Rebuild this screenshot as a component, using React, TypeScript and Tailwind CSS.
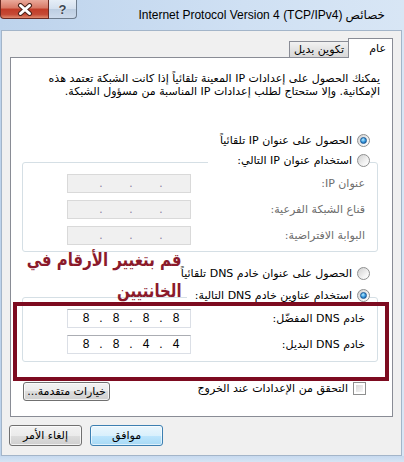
import React from 'react';

type RadioProps = { checked?: boolean };

// Windows 7 style radio bullet
function Radio({ checked }: RadioProps) {
  return (
    <span className="flex h-[13px] w-[13px] shrink-0 items-center justify-center rounded-full border border-[#8e8f8f] bg-[linear-gradient(135deg,#cfcfcf,#f4f4f4_65%,#ffffff)]">
      {checked && (
        <span className="h-[7px] w-[7px] rounded-full border border-[#1c5a96] bg-[radial-gradient(circle_at_40%_35%,#b8edff_0%,#3a9be0_50%,#0e4f94_100%)]" />
      )}
    </span>
  );
}

function Checkbox() {
  return (
    <span className="flex h-[13px] w-[13px] shrink-0 border border-[#8e8f8f] bg-white p-[2px]">
      <span className="block h-full w-full bg-[linear-gradient(135deg,#d9d9d9,#f7f7f7)]" />
    </span>
  );
}

type IpBoxProps = { parts: string[]; disabled?: boolean };

function IpBox({ parts, disabled }: IpBoxProps) {
  return (
    <div
      dir="ltr"
      className={
        disabled
          ? "flex h-[19px] w-[124px] shrink-0 items-center border border-[#d9d9d9] bg-[#f0f0f0] pl-[6px] font-['Liberation_Sans',sans-serif] text-[12px] text-[#8a7fa0]"
          : "flex h-[19px] w-[124px] shrink-0 items-center border border-[#dbdfe6] border-t-[#abadb3] bg-white pl-[6px] font-['Liberation_Sans',sans-serif] text-[12px] text-black"
      }
    >
      {parts.map((p, i) => (
        <React.Fragment key={i}>
          {i > 0 && <span className="w-[6px] text-center">.</span>}
          <span className="w-[24px] text-center">{p}</span>
        </React.Fragment>
      ))}
    </div>
  );
}

type FieldRowProps = { label: string; parts: string[]; disabled?: boolean };

function FieldRow({ label, parts, disabled }: FieldRowProps) {
  return (
    <div className="flex h-[19px] items-center justify-between">
      <span className={disabled ? 'text-[#6d6d6d]' : 'text-black'}>{label}</span>
      <IpBox parts={parts} disabled={disabled} />
    </div>
  );
}

function OptionRow({ label, checked }: { label: string; checked?: boolean }) {
  return (
    <div className="flex h-[16px] items-center gap-[5px]">
      <Radio checked={checked} />
      <span>{label}</span>
    </div>
  );
}

export default function App() {
  return (
    <div className="relative flex h-[462px] w-[404px] flex-col overflow-hidden bg-[linear-gradient(90deg,#bdd3ec,#cfe0f3_60%,#d8e6f5)] font-['DejaVu_Sans',sans-serif] text-[11px] leading-[13px] text-black">
      {/* title bar */}
      <div className="flex h-[30px] shrink-0 items-start">
        <div className="flex h-[19px]">
          <div className="flex h-[19px] w-[49px] items-center justify-center rounded-bl-[4px] border border-t-0 border-[#6b2a22] bg-[linear-gradient(#eaa99a,#d77764_45%,#c23b27_50%,#c54a35_80%,#e08a6e)]">
            <svg width="16" height="13" viewBox="0 0 16 13">
              <path d="M3.5 2.5 L12.5 10.5 M12.5 2.5 L3.5 10.5" stroke="#4a2219" strokeWidth="5" strokeLinecap="round" />
              <path d="M3.5 2.5 L12.5 10.5 M12.5 2.5 L3.5 10.5" stroke="#ffffff" strokeWidth="3" strokeLinecap="round" />
            </svg>
          </div>
          <div className="flex h-[19px] w-[28px] items-center justify-center rounded-br-[4px] border-b border-r border-[#6d7c8d] bg-[linear-gradient(#e6eef7,#d3dfee_50%,#bccde1_50%,#cddbec)] font-['Liberation_Sans',sans-serif] text-[13px] font-bold text-[#3d4652] [text-shadow:0_0_2px_#ffffff]">
            ?
          </div>
        </div>
        <div dir="ltr" className="ml-auto mr-[19px] mt-[8px] flex gap-[3px] text-[12px] leading-[14px]">
          <span className="font-['Liberation_Sans',sans-serif]">Internet Protocol Version 4 (TCP/IPv4)</span>
          <span>خصائص</span>
        </div>
      </div>

      {/* dialog client area */}
      <div dir="rtl" className="ml-[1px] mr-[2px] flex h-[426px] shrink-0 flex-col border border-[#a3b5c9] bg-[#f0f0f0]">
        {/* tabs */}
        <div className="flex h-[26px] items-end px-[8px]">
          <div className="relative z-10 -mb-px flex h-[20px] w-[45px] items-center border border-b-0 border-[#898c95] bg-white pr-[6px]">
            عام
          </div>
          <div className="flex h-[16px] w-[59px] items-center justify-center border-l border-t border-[#898c95] bg-[linear-gradient(#f2f2f2,#e3e3e3_50%,#d9d9d9)]">
            تكوين بديل
          </div>
        </div>

        {/* tab page */}
        <div className="mx-[8px] flex h-[360px] flex-col border border-[#898c95] bg-white">
          <p className="mt-[14px] pl-[30px] pr-[12px]">
            يمكنك الحصول على إعدادات IP المعينة تلقائياً إذا كانت الشبكة تعتمد هذه
            <br />
            الإمكانية. وإلا ستحتاج لطلب إعدادات IP المناسبة من مسؤول الشبكة.
          </p>

          <div className="mt-[34px] pr-[22px]">
            <OptionRow label="الحصول على عنوان IP تلقائياً" checked />
          </div>

          <fieldset className="ml-[11px] mr-[14px] mt-[4px] rounded-[3px] border border-[#d5dfe5]">
            <legend className="mr-[7px] pb-[4px] pl-[29px]">
              <OptionRow label="استخدام عنوان IP التالي:" />
            </legend>
            <div className="mt-[2px] flex flex-col gap-[7px] pb-[6px] pl-[44px] pr-[12px]">
              <FieldRow label="عنوان IP:" parts={['', '', '', '']} disabled />
              <FieldRow label="قناع الشبكة الفرعية:" parts={['', '', '', '']} disabled />
              <FieldRow label="البوابة الافتراضية:" parts={['', '', '', '']} disabled />
            </div>
          </fieldset>

          <div className="mt-[13px] pr-[22px]">
            <OptionRow label="الحصول على عنوان خادم DNS تلقائياً" />
          </div>

          <fieldset className="ml-[11px] mr-[14px] mt-[6px] rounded-[3px] border border-[#d5dfe5]">
            <legend className="mr-[7px] pb-[4px] pl-[8px]">
              <OptionRow label="استخدام عناوين خادم DNS التالية:" checked />
            </legend>
            <div className="mt-[2px] flex flex-col gap-[7px] pb-[7px] pl-[44px] pr-[12px]">
              <FieldRow label="خادم DNS المفضّل:" parts={['8', '8', '8', '8']} />
              <FieldRow label="خادم DNS البديل:" parts={['8', '8', '4', '4']} />
            </div>
          </fieldset>

          <div className="mt-[20px] flex items-start justify-between pl-[12px] pr-[26px]">
            <div className="flex h-[13px] items-center gap-[5px]">
              <Checkbox />
              <span>التحقق من الإعدادات عند الخروج</span>
            </div>
            <div className="flex h-[19px] w-[87px] items-center justify-center rounded-[3px] border border-[#707070] bg-[linear-gradient(#f2f2f2,#ebebeb_50%,#dddddd_50%,#cfcfcf)] shadow-[inset_0_0_0_1px_rgba(255,255,255,0.7)]">
              خيارات متقدمة...
            </div>
          </div>
        </div>

        {/* dialog buttons */}
        <div className="mt-[8px] flex justify-end gap-[8px] pl-[7px]">
          <div className="flex h-[21px] w-[73px] items-center justify-center rounded-[3px] border border-[#3c7fb1] bg-[linear-gradient(#eaf6fd,#d9f0fc_50%,#bee6fd_50%,#a7d9f5)] shadow-[inset_0_0_0_1px_rgba(255,255,255,0.6)]">
            موافق
          </div>
          <div className="flex h-[21px] w-[73px] items-center justify-center rounded-[3px] border border-[#707070] bg-[linear-gradient(#f2f2f2,#ebebeb_50%,#dddddd_50%,#cfcfcf)] shadow-[inset_0_0_0_1px_rgba(255,255,255,0.7)]">
            إلغاء الأمر
          </div>
        </div>
      </div>

      {/* bottom frame edge */}
      <div className="h-[6px] shrink-0 bg-[linear-gradient(#c6d9ef,#d6e4f4)]" />

      {/* hand-drawn annotation over the DNS section */}
      <div className="pointer-events-none absolute left-[13px] top-[302px] h-[79px] w-[376px] border-[4px] border-[#7d0b20]" />
      <div dir="rtl" className="pointer-events-none absolute right-[222px] top-[244px] origin-right scale-x-[0.83] whitespace-nowrap text-right text-[18px] font-bold leading-[31px] text-[#8b1a2b]">
        قم بتغيير الأرقام في
        <br />
        الخانتيين
      </div>
    </div>
  );
}
